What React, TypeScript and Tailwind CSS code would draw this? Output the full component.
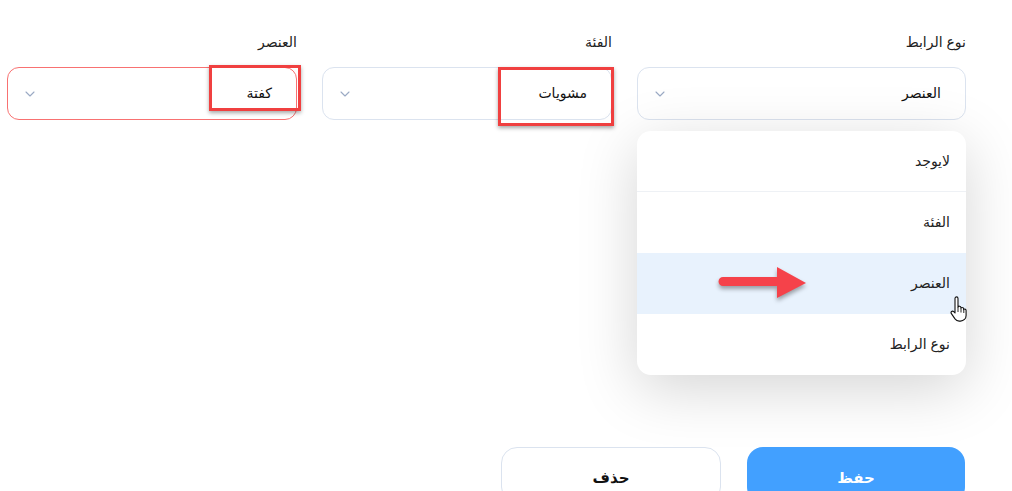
import { ChevronDown } from 'lucide-react'

const font = { fontFamily: 'Arial, "Liberation Sans", "DejaVu Sans", sans-serif' }

function Field({ label, value, width, error = false }: { label: string; value: string; width: string; error?: boolean }) {
  return (
    <div className={`${width} shrink-0 flex flex-col`}>
      <div className="w-full text-right text-[14px] text-[#222] leading-5 h-5 mb-[15px]">{label}</div>
      <div
        className={`h-[53px] rounded-[12px] border bg-white flex items-center justify-between pr-[24px] pl-[14px] ${
          error ? 'border-[#f87171]' : 'border-[#dbe3ef]'
        }`}
      >
        <span className="text-[14px] text-[#111]">{value}</span>
        <ChevronDown size={16} strokeWidth={1.6} className="text-[#9aa9c4]" />
      </div>
    </div>
  )
}

function Arrow() {
  return (
    <svg width="100" height="50" viewBox="0 0 100 50" className="absolute left-[714px] top-[260px]" style={{ filter: 'drop-shadow(0 3px 2px rgba(0,0,0,0.35))' }}>
      <path d="M9 17 L64 17 L64 26 L9 26 A4.5 4.5 0 0 1 9 17 Z" fill="#f5424a" />
      <path d="M63 7 L92 23 L63 38 Z" fill="#f5424a" />
    </svg>
  )
}

function Cursor() {
  return (
    <svg width="18" height="26" viewBox="0 0 18 26" className="absolute left-[950px] top-[296px]">
      <path
        d="M5 2.5c0-1 .7-1.6 1.5-1.6S8 1.5 8 2.5v8.5c.3-.6 1-.9 1.6-.8.8.1 1.3.7 1.3 1.4v.6c.3-.5.9-.8 1.5-.7.8.1 1.2.7 1.2 1.4v.7c.3-.4.9-.6 1.4-.5.7.2 1.1.8 1.1 1.5v4.8c0 3.2-2.4 5.7-5.6 5.7H9.2c-1.7 0-3.2-.8-4.2-2.2L1.4 17.6c-.5-.7-.4-1.6.2-2.1.6-.5 1.5-.5 2.1.1L5 17V2.5z"
        fill="#fff"
        stroke="#111"
        strokeWidth="1.1"
        strokeLinejoin="round"
      />
      <path d="M8 11v5M11 12.5v4M13.8 14v3" stroke="#111" strokeWidth="0.9" />
    </svg>
  )
}

export default function App() {
  return (
    <div className="relative w-[1012px] h-[491px] overflow-hidden bg-white" style={font}>
      <div dir="rtl" className="pt-[32px] pr-[46px] pl-[7px]">
        <div className="flex gap-[25px]">
          <div className="relative w-[329px] shrink-0">
            <Field label="نوع الرابط" value="العنصر" width="w-[329px]" />
            <div className="absolute top-[99px] right-0 w-[329px] bg-white rounded-[14px] shadow-[0_14px_60px_rgba(0,0,0,0.17)] overflow-hidden z-10">
              {['لايوجد', 'الفئة', 'العنصر', 'نوع الرابط'].map((item, i) => (
                <div
                  key={item}
                  className={`h-[61px] flex items-center pr-[16px] text-[14px] text-[#222] ${i === 0 ? 'border-b border-[#eef1f5]' : ''} ${
                    i === 2 ? 'bg-[#e8f2fd]' : ''
                  }`}
                >
                  {item}
                </div>
              ))}
            </div>
          </div>
          <Field label="الفئة" value="مشويات" width="w-[290px]" />
          <Field label="العنصر" value="كفتة" width="w-[290px]" error />
        </div>

        <div className="flex gap-[26px] mt-[327px] pr-[1px]">
          <button className="w-[218px] h-[56px] rounded-[16px] bg-[#42a0ff] text-white font-bold text-[15px] pt-[6px]">حفظ</button>
          <button className="w-[220px] h-[56px] rounded-[16px] bg-white border border-[#dbe3ef] text-[#111] font-bold text-[15px] pt-[6px]">حذف</button>
        </div>
      </div>

      <div className="absolute left-[209px] top-[65px] w-[92px] h-[46px] border-[3px] border-[#f04040] shadow-[0_2px_4px_rgba(0,0,0,0.35)] pointer-events-none" />
      <div className="absolute left-[498px] top-[67px] w-[116px] h-[59px] border-[3px] border-[#f04040] shadow-[0_2px_4px_rgba(0,0,0,0.35)] pointer-events-none" />

      <div className="absolute inset-0 z-20 pointer-events-none">
        <Arrow />
        <Cursor />
      </div>
    </div>
  )
}
